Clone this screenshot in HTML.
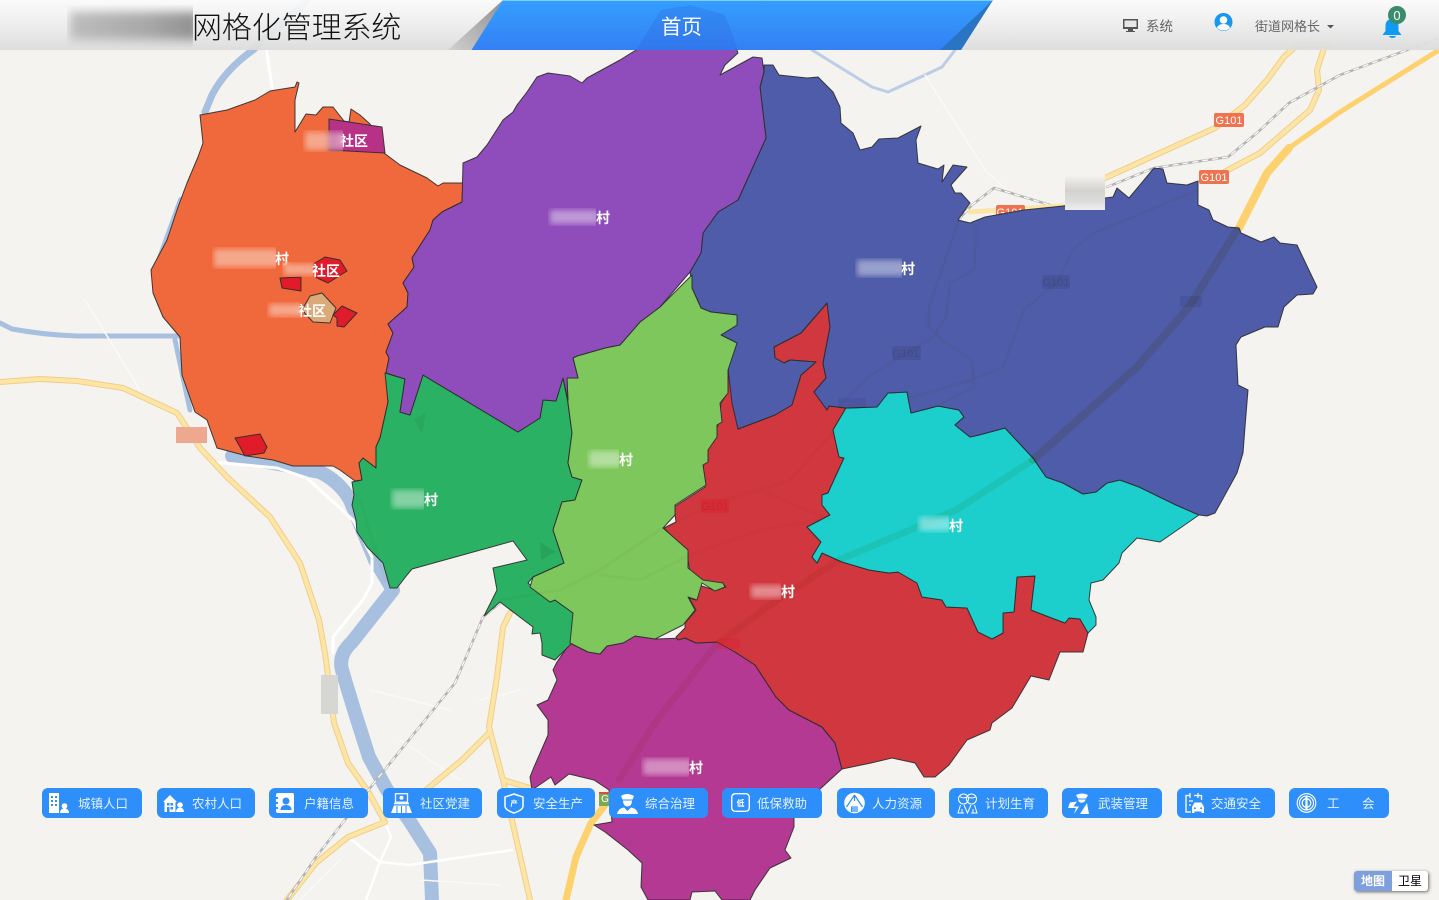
<!DOCTYPE html>
<html lang="zh">
<head>
<meta charset="utf-8">
<title>网格化管理系统</title>
<style>
html,body{margin:0;padding:0;width:1439px;height:900px;overflow:hidden;background:#f4f3ef;font-family:"Liberation Sans","Noto Sans CJK SC",sans-serif}
svg{position:absolute;left:0;top:0}
svg text{font-family:"Liberation Sans","Noto Sans CJK SC",sans-serif}
.hd{position:absolute;left:0;top:0;width:1439px;height:50px;background:linear-gradient(#fbfbfb,#efefef 45%,#dcdcdc);opacity:.93}
.abs{position:absolute;white-space:nowrap}
.patch{position:absolute;overflow:hidden;-webkit-backdrop-filter:blur(3px);backdrop-filter:blur(3px)}
.patch:before{content:"";position:absolute;left:2px;top:2px;right:-3px;bottom:2px;background:rgba(255,255,255,.42);filter:blur(3px)}
.btn{position:absolute;top:788px;height:30px;border-radius:6px;background:#2e8ffa}
.bt{position:absolute;top:789px;height:30px;line-height:30px;font-size:12.5px;color:#e6f1ff;white-space:nowrap}
.vl{position:absolute;font-size:14px;font-weight:bold;color:#fff;line-height:16px;white-space:nowrap}
</style>
</head>
<body>
<svg width="1439" height="900" viewBox="0 0 1439 900">
  <rect width="1439" height="900" fill="#f4f3ef"/>
  <g fill="none" stroke-linejoin="round" stroke-linecap="round">
    <!-- water -->
    <path d="M307 0L253 50Q225 70 212 95L205 112" stroke="#a8c0e0" stroke-width="7"/>
    <path d="M181 200L160 258" stroke="#a8c0e0" stroke-width="6"/>
    <path d="M0 323L12 329Q45 335 77 336L180 336" stroke="#a8c0e0" stroke-width="5"/>
    <path d="M175 340L190 410" stroke="#a8c0e0" stroke-width="5"/>
    <path d="M232 456L273 463L320 472Q340 482 350 500L375 560L393 590L352 642Q338 655 342 670L355 713L369 757L387 790L409 820L430 853L432 900" stroke="#a8c0e0" stroke-width="14"/>
    <path d="M812 50L872 87L888 92L925 75L942 67L955 50Q960 35 935 10" stroke="#bccde6" stroke-width="3"/>
    <path d="M1000 0Q1030 15 1022 30Q1010 45 990 40" stroke="#dde3ea" stroke-width="2"/>
    <!-- white roads -->
    <path d="M265 40L272 87" stroke="#fff" stroke-width="3"/>
    <path d="M213 462L277 468L307 478L353 520L372 557L372 583L363 600L333 637L333 653" stroke="#fff" stroke-width="3"/>
    <path d="M85 300L140 390" stroke="#fafaf8" stroke-width="1.5"/>
    <path d="M925 75L985 170L1007 190" stroke="#fafaf8" stroke-width="1.5"/>
    <path d="M385 822L391 837L380 862L366 900M348 837L380 862L409 865L512 850" stroke="#fff" stroke-width="2.5"/>
    <path d="M370 690L450 710M400 740L460 780M480 700L520 690M340 860L300 900M420 880L500 885" stroke="#f9f9f7" stroke-width="1.500"/>
    <!-- yellow roads -->
    <g stroke="#f0cf86" stroke-width="6">
      <path d="M0 382L40 379L77 381L123 388L177 413L200 448L227 477L270 517L300 563L319 620L325 653L334 723L348 763L369 793L385 822L348 837L316 863L287 900"/>
      <path d="M510 613L503 627L497 677L489 727L503 780L530 900M489 733L462 760L420 795M503 780L530 788"/>
      <path d="M1105 178L1215 128L1245 105L1267 80L1284 57L1297 45L1330 45M1210 180L1228 170L1260 153L1310 110L1319 90L1317 70L1325 45"/>
    </g>
    <g stroke="#fde5a8" stroke-width="4">
      <path d="M0 382L40 379L77 381L123 388L177 413L200 448L227 477L270 517L300 563L319 620L325 653L334 723L348 763L369 793L385 822L348 837L316 863L287 900"/>
      <path d="M510 613L503 627L497 677L489 727L503 780L530 900M489 733L462 760L420 795M503 780L530 788"/>
      <path d="M1105 178L1215 128L1245 105L1267 80L1284 57L1297 45L1330 45M1210 180L1228 170L1260 153L1310 110L1319 90L1317 70L1325 45"/>
    </g>
    <!-- highway -->
    <path d="M566 900L576 857L591 823L605 805" stroke="#fdd26e" stroke-width="7"/>
    <path d="M1239 228L1267 173L1289 148" stroke="#fdd26e" stroke-width="8"/>
    <path d="M1289 148L1340 112L1439 50" stroke="#fdd26e" stroke-width="5"/>
    <!-- rail -->
    <path d="M1107 187L1154 168L1228 157L1258 132L1289 103L1340 75L1439 38M958 220L972 205L994 188L1050 205M500 603L483 617L455 683L387 767L366 793L316 857L287 900" stroke="#b4b4b4" stroke-width="2.5"/>
    <path d="M1107 187L1154 168L1228 157L1258 132L1289 103L1340 75L1439 38M958 220L972 205L994 188L1050 205M500 603L483 617L455 683L387 767L366 793L316 857L287 900" stroke="#fff" stroke-width="1.2" stroke-dasharray="5 5"/>
    <path d="M970 212L1063 206" stroke="#fde5a8" stroke-width="5"/>
  </g>
  <!-- road labels on base map -->
  <g font-size="11" fill="#fff" text-anchor="middle">
    <rect x="1214" y="113" width="30" height="14" rx="2" fill="#ef7350"/><text x="1229" y="124">G101</text>
    <rect x="1199" y="170" width="30" height="14" rx="2" fill="#ef7350"/><text x="1214" y="181">G101</text>
    <rect x="996" y="205" width="29" height="14" rx="2" fill="#ef7350"/><text x="1010" y="216">G101</text>
  </g>
  <!-- regions -->
  <g stroke="#2b2b2b" stroke-width="1" stroke-linejoin="round" stroke-opacity=".9">
    <polygon fill="#f0693c" points="200,115 227,110 255,100 270,91 295,87 297,82 299,83 295,100 295,132 306,114 316,115 323,107 333,107 344,121 349,122 351,109 360,115 370,124 384,153 400,165 427,178 438,186 443,183 463,183 462,202 442,212 433,220 430,230 412,258 414,267 403,283 408,293 407,307 388,324 393,333 386,352 389,358 386,373 388,402 380,438 376,447 376,468 363,458 359,463 362,480 355,481 340,470 333,466 293,466 273,460 247,456 217,448 207,420 195,412 182,375 180,337 163,317 153,293 151,270 167,240 178,207 187,183 198,157 203,143"/>
    <polygon fill="#b43993" points="570,643 557,662 553,670 557,680 548,700 537,705 548,720 548,735 534,767 530,777 532,790 551,777 555,785 569,774 594,780 609,790 612,822 594,825 605,832 628,850 642,863 641,887 648,900 690,900 692,892 715,891 722,900 750,900 755,890 770,868 791,858 785,850 794,827 794,818 819,790 842,769 835,743 822,727 789,710 776,697 755,665 735,652 717,642 696,643 685,638 655,639 635,636 623,643 607,646 600,654 588,652"/>
    <polygon fill="#d0373f" points="728,368 733,390 738,429 775,415 792,405 801,375 816,362 790,360 784,363 775,358 774,347 801,333 827,303 830,327 823,363 826,378 814,392 827,410 829,406 846,408 833,430 839,457 844,458 828,493 822,495 822,505 830,515 807,527 821,542 812,557 817,563 822,553 842,562 869,570 889,573 898,572 917,583 922,597 942,600 946,607 967,608 978,632 992,639 1003,633 1003,613 1014,612 1017,577 1035,576 1031,610 1049,617 1065,623 1069,618 1080,619 1088,633 1083,652 1060,652 1049,680 1031,676 1012,708 992,723 990,730 967,740 949,765 935,777 924,777 915,763 892,758 871,763 842,769 835,743 822,727 789,710 776,697 755,665 735,652 717,642 696,643 685,638 678,640 676,637 685,628 685,623 696,610 689,598 696,600 699,585 714,590 726,587 722,583 703,583 690,573 687,553 664,528 676,522 674,507 705,487 703,465 708,460 708,450 715,433 719,422 721,403 728,392"/>
    <polygon fill="#1ccfcd" points="846,408 877,407 888,393 907,392 911,413 938,406 959,410 964,417 955,425 970,437 979,435 1005,428 1033,458 1046,477 1063,483 1083,494 1096,492 1107,483 1120,480 1139,487 1176,505 1199,515 1160,542 1137,538 1122,553 1119,563 1103,580 1091,583 1089,600 1096,617 1096,625 1088,633 1080,619 1069,618 1065,623 1049,617 1031,610 1035,576 1017,577 1014,612 1003,613 1003,633 992,639 978,632 967,608 946,607 942,600 922,597 917,583 898,572 889,573 869,570 842,562 822,553 817,563 812,557 821,542 807,527 830,515 822,505 822,495 828,493 844,458 839,457 833,430"/>
    <polygon fill="#4f5ca9" points="764,65 773,65 779,75 807,78 818,77 833,92 840,107 841,123 853,133 860,150 872,147 879,139 898,138 921,126 916,140 918,163 938,169 944,165 942,182 953,165 967,167 951,185 955,193 961,193 970,203 958,220 970,223 985,217 1024,210 1063,206 1105,198 1113,197 1117,188 1129,198 1154,168 1163,169 1167,183 1187,185 1198,181 1198,205 1209,210 1213,220 1228,227 1239,228 1241,233 1261,242 1274,237 1280,243 1297,245 1317,287 1313,294 1297,295 1284,307 1278,327 1265,327 1241,337 1236,345 1238,385 1248,390 1245,427 1243,453 1237,473 1215,513 1207,516 1199,515 1176,505 1139,487 1120,480 1107,483 1096,492 1083,494 1063,483 1046,477 1033,458 1005,428 979,435 970,437 955,425 964,417 959,410 938,406 911,413 907,392 888,393 877,407 846,408 829,406 827,410 814,392 826,378 823,363 830,327 827,303 801,333 774,347 775,358 784,363 790,360 816,362 801,375 792,405 775,415 738,429 732,403 728,368 737,343 721,335 737,325 737,315 711,312 701,308 692,288 690,272 701,253 703,233 718,212 738,200 766,138 760,87 764,72"/>
    <polygon fill="#2bb163" points="385,373 405,379 400,412 410,415 423,375 518,432 540,418 543,400 556,401 563,378 568,403 572,433 568,463 572,477 582,480 575,500 562,502 553,530 564,563 533,577 528,583 550,602 555,600 573,613 572,643 555,660 542,655 542,643 540,633 532,634 533,627 500,602 484,616 497,590 493,568 527,560 513,541 412,569 407,575 397,588 390,588 383,563 367,547 357,532 356,520 352,505 354,495 352,482 362,480 359,463 363,458 376,468 376,447 380,438 388,402"/>
    <polygon fill="#7ec75d" points="692,275 692,288 701,308 711,312 737,315 737,325 721,335 737,343 728,370 728,393 720,403 722,422 717,425 717,437 708,450 708,462 703,465 706,485 675,505 675,515 663,528 688,550 688,568 703,580 723,583 725,587 715,591 702,583 697,600 688,597 695,610 683,625 655,639 635,636 623,643 607,646 600,654 588,652 570,643 573,613 555,600 550,602 530,587 533,577 564,563 553,530 562,502 575,500 582,480 572,477 568,463 572,433 568,403 567,378 578,378 573,358 577,356 605,348 620,345 640,322 660,307"/>
    <polygon fill="#8f4dbb" points="661,10 690,5 725,15 738,53 725,65 720,75 753,57 762,58 764,72 760,87 766,138 738,200 718,212 703,233 701,253 690,272 660,307 640,322 620,345 605,348 577,356 573,358 578,378 567,378 568,400 563,378 556,401 543,400 540,418 518,432 423,375 410,415 400,412 405,379 386,373 389,358 386,352 393,333 388,324 407,307 408,293 403,283 414,267 412,258 430,230 433,220 442,212 462,202 463,163 477,157 487,145 503,120 513,112 517,105 527,92 537,77 548,73 570,76 582,83 587,78 620,60 636,50"/>
    <polygon fill="#e01b2a" points="315,263 325,257 340,260 347,271 328,283 315,277"/>
    <polygon fill="#e01b2a" points="280,278 282,288 301,291 301,277"/>
    <polygon fill="#dcaa78" points="310,296 322,293 336,308 330,323 313,322 302,310"/>
    <polygon fill="#e01b2a" points="342,306 357,313 344,327 337,326 337,318 333,315"/>
    <polygon fill="#e01b2a" points="235,438 260,434 267,447 264,453 245,456"/>
    <polygon fill="#b73287" points="329,119 382,127 385,153 329,150"/>
  </g>
  <!-- roads seen through regions -->
  <g fill="none" stroke="#e0d0a0" style="mix-blend-mode:multiply" opacity=".42" stroke-linejoin="round" stroke-linecap="round">
    <path d="M1237 230L1189 307L1137 367L1033 460" stroke-width="8"/>
  </g>
  <g fill="none" stroke="#e0d0a0" style="mix-blend-mode:multiply" opacity=".28" stroke-linejoin="round" stroke-linecap="round">
    <path d="M1033 460L956 510L910 530L839 560L767 607L714 647L655 723L619 780" stroke-width="7"/>
  </g>
  <g fill="none" stroke="#e0d0a0" style="mix-blend-mode:multiply" opacity=".14" stroke-linejoin="round" stroke-linecap="round" stroke-width="3">
    <path d="M959 220L929 307L929 327L942 340L972 360L974 387L942 403"/>
    <path d="M976 227L974 270L950 283L946 317L933 337L868 377L842 403"/>
    <path d="M1198 190L1094 233L1072 250L1059 280L1024 310L1003 367L972 380L911 397"/>
    <path d="M835 430L790 480L700 510L660 530L600 570L560 590L500 600M830 520L760 490L700 505M600 575L640 580L690 555L760 530L820 520"/>
    <path d="M360 500L385 580"/>
  </g>
  <g font-size="11" text-anchor="middle" fill="#000" fill-opacity=".1">
    <rect x="1042" y="275" width="28" height="14" rx="2" fill-opacity=".08"/><text x="1056" y="286">G101</text>
    <rect x="1180" y="296" width="22" height="11" rx="2" fill-opacity=".08"/>
    <rect x="892" y="346" width="29" height="14" rx="2" fill-opacity=".08"/><text x="906" y="357">G101</text>
    <rect x="838" y="398" width="28" height="11" rx="2" fill-opacity=".06"/>
    <rect x="701" y="499" width="28" height="14" rx="2" fill="#e02030" fill-opacity=".45"/><text x="715" y="510">G101</text>
    <rect x="717" y="638" width="23" height="11" rx="2" fill="#e02030" fill-opacity=".35"/>
    <polygon points="426,412 414,420 422,434" fill-opacity=".05"/>
    <polygon points="540,542 556,552 541,560" fill-opacity=".07"/>
  </g>
</svg>

<!-- region labels (masked portions blurred by the patches that follow) -->
<div class="vl" style="left:340px;top:133px">社区</div>
<div class="vl" style="left:596px;top:210px">村</div>
<div class="vl" style="left:275px;top:251px">村</div>
<div class="vl" style="left:312px;top:263px">社区</div>
<div class="vl" style="left:298px;top:303px">社区</div>
<div class="vl" style="left:901px;top:261px">村</div>
<div class="vl" style="left:619px;top:452px">村</div>
<div class="vl" style="left:424px;top:492px">村</div>
<div class="vl" style="left:949px;top:518px">村</div>
<div class="vl" style="left:781px;top:584px">村</div>
<div class="vl" style="left:689px;top:760px">村</div>

<!-- blurred masked labels -->
<div class="patch" style="left:303px;top:130px;width:40px;height:22px"></div>
<div class="patch" style="left:548px;top:208px;width:48px;height:18px"></div>
<div class="patch" style="left:212px;top:247px;width:64px;height:22px"></div>
<div class="patch" style="left:282px;top:262px;width:31px;height:15px"></div>
<div class="patch" style="left:267px;top:302px;width:33px;height:16px"></div>
<div class="patch" style="left:855px;top:258px;width:47px;height:20px"></div>
<div class="patch" style="left:587px;top:449px;width:32px;height:20px"></div>
<div class="patch" style="left:390px;top:488px;width:34px;height:22px"></div>
<div class="patch" style="left:917px;top:515px;width:32px;height:18px"></div>
<div class="patch" style="left:749px;top:583px;width:32px;height:17px"></div>
<div class="patch" style="left:641px;top:757px;width:48px;height:20px"></div>
<div class="abs" style="left:176px;top:427px;width:31px;height:16px;background:#eea88f"></div>
<div class="abs" style="left:321px;top:675px;width:17px;height:39px;background:#d6d6d2"></div>
<div class="abs" style="left:1065px;top:175px;width:40px;height:35px;background:linear-gradient(#f4f3ef,#d4d2ce 45%,#dcdcdc 75%,#eee)"></div>

<!-- header -->
<div class="hd"></div>
<svg width="1439" height="50" viewBox="0 0 1439 50">
  <defs>
    <linearGradient id="hb" x1="0" y1="0" x2="0" y2="1"><stop offset="0" stop-color="#2b9bff"/><stop offset="1" stop-color="#2d7cf5"/></linearGradient>
    <linearGradient id="hf" x1="0" y1="1" x2="1" y2="0"><stop offset="0" stop-color="#d0d0d0"/><stop offset="1" stop-color="#8f8f8f"/></linearGradient>
  </defs>
  <polygon points="448,50 503,0 472,50" fill="url(#hf)"/>
  <polygon points="503,0 993,0 961,50 471.5,50" fill="url(#hb)" opacity=".96"/>
  <polygon points="993,0 940,50 961,50" fill="#2a74c4"/>
  <rect x="503" y="0" width="490" height="1" fill="#7fd0ff"/>
  <path d="M661 10L690 5L725 15L738 50L636 50Z" fill="#2a5fd8" opacity=".25"/>
  <!-- monitor -->
  <path d="M1123 19h15v10h-5v2h2v1h-9v-1h2v-2h-5z" fill="#555"/>
  <rect x="1124.5" y="20.500" width="12" height="6.500" fill="#e8e8e8"/>
  <!-- avatar -->
  <ellipse cx="1223.500" cy="22" rx="9" ry="9" fill="#1897f0"/>
  <circle cx="1223.500" cy="20" r="3.800" fill="#fff"/>
  <path d="M1217 28q1-4 6.500-4t6.500 4q-3 2.500-6.500 2.500t-6.500-2.500z" fill="#fff"/>
  <!-- caret -->
  <path d="M1327 25h7l-3.500 3.500z" fill="#555"/>
  <!-- bell -->
  <path d="M1392.500 19q6 0 6 7v5l3 4h-19l3-4v-5q0-7 7-7z" fill="#0f9bf2"/>
  <path d="M1389 36h7q-.5 2-3.500 2t-3.500-2z" fill="#0f9bf2"/>
  <circle cx="1397" cy="15" r="9" fill="#3a8c6c"/>
  <text x="1397" y="20" font-size="13" fill="#fff" text-anchor="middle">0</text>
</svg>
<div class="abs" style="left:67px;top:5px;width:126px;height:42px;overflow:hidden"><div style="position:absolute;left:3px;top:7px;right:-6px;bottom:7px;background:linear-gradient(90deg,#bdbdbd,#a8a8a8 60%,#8f8f8f);filter:blur(5px)"></div></div>
<div class="abs" style="left:192px;top:8px;font-size:30px;line-height:42px;color:#111;font-weight:300;letter-spacing:-.1px">网格化管理系统</div>
<div class="abs" style="left:661px;top:13px;font-size:20.500px;line-height:30px;color:#fff">首页</div>
<div class="abs" style="left:1146px;top:18px;font-size:13.500px;line-height:18px;color:#666">系统</div>
<div class="abs" style="left:1255px;top:18px;font-size:13px;line-height:18px;color:#666">街道网格长</div>

<!-- G icon under buttons -->
<div class="abs" style="left:599px;top:792px;width:12px;height:12px;background:#7fa84f;color:#fff;font-size:10px;line-height:12px;text-align:center;border-top:2px solid #d0543c">G</div>

<!-- buttons -->
<div class="btn" style="left:42px;width:100px"></div>
<div class="btn" style="left:157px;width:98px"></div>
<div class="btn" style="left:269px;width:99px"></div>
<div class="btn" style="left:383px;width:99px"></div>
<div class="btn" style="left:497px;width:98px"></div>
<div class="btn" style="left:609px;width:99px"></div>
<div class="btn" style="left:722px;width:100px"></div>
<div class="btn" style="left:837px;width:98px"></div>
<div class="btn" style="left:949px;width:99px"></div>
<div class="btn" style="left:1062px;width:100px"></div>
<div class="btn" style="left:1177px;width:98px"></div>
<div class="btn" style="left:1289px;width:100px"></div>

<div class="bt" style="left:78px">城镇人口</div>
<div class="bt" style="left:192px">农村人口</div>
<div class="bt" style="left:304px">户籍信息</div>
<div class="bt" style="left:420px">社区党建</div>
<div class="bt" style="left:533px">安全生产</div>
<div class="bt" style="left:645px">综合治理</div>
<div class="bt" style="left:757px">低保救助</div>
<div class="bt" style="left:872px">人力资源</div>
<div class="bt" style="left:985px">计划生育</div>
<div class="bt" style="left:1098px">武装管理</div>
<div class="bt" style="left:1211px">交通安全</div>
<div class="bt" style="left:1327px">工</div>
<div class="bt" style="left:1362px">会</div>

<svg width="1439" height="900" viewBox="0 0 1439 900" style="pointer-events:none">
  <!-- 1 building + person -->
  <g transform="translate(49,793)" fill="#fff">
    <rect width="10" height="20"/>
    <g fill="#2e8ffa"><rect x="2" y="3" width="2" height="2"/><rect x="6" y="3" width="2" height="2"/><rect x="2" y="7" width="2" height="2"/><rect x="6" y="7" width="2" height="2"/><rect x="2" y="11" width="2" height="2"/><rect x="6" y="11" width="2" height="2"/></g>
    <circle cx="15.500" cy="13" r="2.800"/><path d="M11 20q0-4.500 4.500-4.500t4.500 4.500z"/>
  </g>
  <!-- 2 house + person -->
  <g transform="translate(163,795)" fill="#fff">
    <path d="M7 0L14 7H12.500V17H1.500V7H0z"/>
    <g fill="#2e8ffa"><rect x="4" y="8" width="2.500" height="2.500"/><rect x="7.500" y="8" width="2.500" height="2.500"/><rect x="4" y="12" width="2.500" height="5"/><rect x="7.500" y="12" width="2.500" height="2.500"/></g>
    <circle cx="17" cy="10" r="2.800"/><path d="M13 17q0-4.300 4-4.300t4 4.300z"/>
  </g>
  <!-- 3 contact book -->
  <g transform="translate(276,793)">
    <rect width="18" height="20" rx="2" fill="#fff"/>
    <path d="M0 4h2v2h-2zM0 9h2v2h-2zM0 14h2v2h-2z" fill="#2e8ffa"/>
    <circle cx="10" cy="8" r="3.500" fill="#2e8ffa"/><path d="M4.500 17q0-5 5.500-5t5.500 5z" fill="#2e8ffa"/>
  </g>
  <!-- 4 party building -->
  <g transform="translate(391,793)">
    <rect x="4.500" y=".7" width="12" height="8.500" fill="none" stroke="#fff" stroke-width="1.300"/>
    <circle cx="10.500" cy="4.700" r="2" fill="#fff"/>
    <path d="M3 9.800h15v1.500H3z" fill="#fff"/>
    <path d="M0 20L3 12.500H18L21 20z" fill="#fff"/>
    <path d="M6 13v7M10.500 13v7M15 13v7" stroke="#2e8ffa" stroke-width="1"/>
  </g>
  <!-- 5 shield -->
  <g transform="translate(504,793)">
    <path d="M10 1L19 4V13Q19 17 10 20Q1 17 1 13V4Z" fill="none" stroke="#fff" stroke-width="1.500"/>
    <text x="10" y="13" font-size="7.500" font-weight="bold" fill="#fff" text-anchor="middle">产</text>
  </g>
  <!-- 6 police -->
  <g transform="translate(617,793)" fill="#fff">
    <path d="M4 3Q10 -1 17 3L15.500 6.500H5.500Z"/>
    <path d="M6 7.500H15Q15 13 10.500 13.500Q6 13 6 7.500Z"/>
    <path d="M0 21Q1 15.500 7 14.500L10.500 18L14 14.500Q20 15.500 21 21Z"/>
  </g>
  <!-- 7 low income -->
  <g transform="translate(731,793)">
    <rect x=".7" y=".7" width="17.600" height="17.600" rx="3.500" fill="none" stroke="#fff" stroke-width="1.400"/>
    <text x="9.500" y="13" font-size="8" font-weight="bold" fill="#fff" text-anchor="middle">低</text>
  </g>
  <!-- 8 human resources -->
  <g transform="translate(844,793)">
    <circle cx="10.500" cy="10" r="10.300" fill="#fff"/>
    <path d="M10.500 2L2.500 14M10.500 2V8M10.500 2L18.500 14" stroke="#2e8ffa" stroke-width="1.200" fill="none"/>
    <path d="M7 13.500h7V19H7z" fill="#2e8ffa"/>
    <path d="M9 14v5M11 14v5M13 14v5" stroke="#fff" stroke-width=".7"/>
  </g>
  <!-- 9 family -->
  <g transform="translate(957,793)" fill="none" stroke="#fff" stroke-width="1">
    <circle cx="6.500" cy="6" r="5"/><circle cx="14.500" cy="6" r="5"/>
    <path d="M3 3.500Q6 6 10 4M11 4Q14 6 18.500 4"/>
    <path d="M3.500 12L1 20H7M17.500 12L20 20H14M7 12L10.500 20L14 12M5 16v4M16 16v4"/>
  </g>
  <!-- 10 armed -->
  <g transform="translate(1068,793)" fill="#fff">
    <path d="M8 2Q14 -1 20 2L18 5.500H10Z"/>
    <path d="M10 6.500H17.500Q17 9.500 13.500 9.800Q10.500 9.500 10 6.500Z"/>
    <path d="M2 9.500L9 8.500L5.500 13.500H11L6 21L8 15H0Z"/>
    <path d="M12 21L19 10L21 21Z"/>
  </g>
  <!-- 11 traffic -->
  <g transform="translate(1185,793)">
    <path d="M9 2.500H16.500V7M4.500 2.500H1V19H6" fill="none" stroke="#fff" stroke-width="1.300"/>
    <path d="M5 0v5M13 0v5M4 8h4M4 12h2" stroke="#fff" stroke-width="1.300"/>
    <path d="M7 14L9.500 9.500H16.500L19 14V20H16.500V18.500H9.500V20H7Z" fill="#fff"/>
    <circle cx="9.800" cy="15.300" r="1" fill="#2e8ffa"/><circle cx="16.200" cy="15.300" r="1" fill="#2e8ffa"/>
  </g>
  <!-- 12 union -->
  <g transform="translate(1297,793)" fill="none" stroke="#fff">
    <circle cx="9.500" cy="10" r="9.300" stroke-width="1.100"/>
    <circle cx="9.500" cy="10" r="7" stroke-width="1.100"/>
    <circle cx="9.500" cy="10" r="4.300" stroke-width="1.300"/>
    <path d="M9.500 3v14" stroke-width="2.200"/>
  </g>
</svg>

<!-- map type control -->
<div class="abs" style="left:1354px;top:871px;width:74px;height:20px;border-radius:3px;box-shadow:1px 1px 3px #666;overflow:hidden;background:#fff">
  <div style="position:absolute;left:0;top:0;width:38px;height:20px;background:#7d9fdd;color:#fff;font-size:12px;font-weight:bold;line-height:20px;text-align:center">地图</div>
  <div style="position:absolute;left:38px;top:0;width:36px;height:20px;color:#000;font-size:12px;line-height:20px;text-align:center">卫星</div>
</div>
</body>
</html>
